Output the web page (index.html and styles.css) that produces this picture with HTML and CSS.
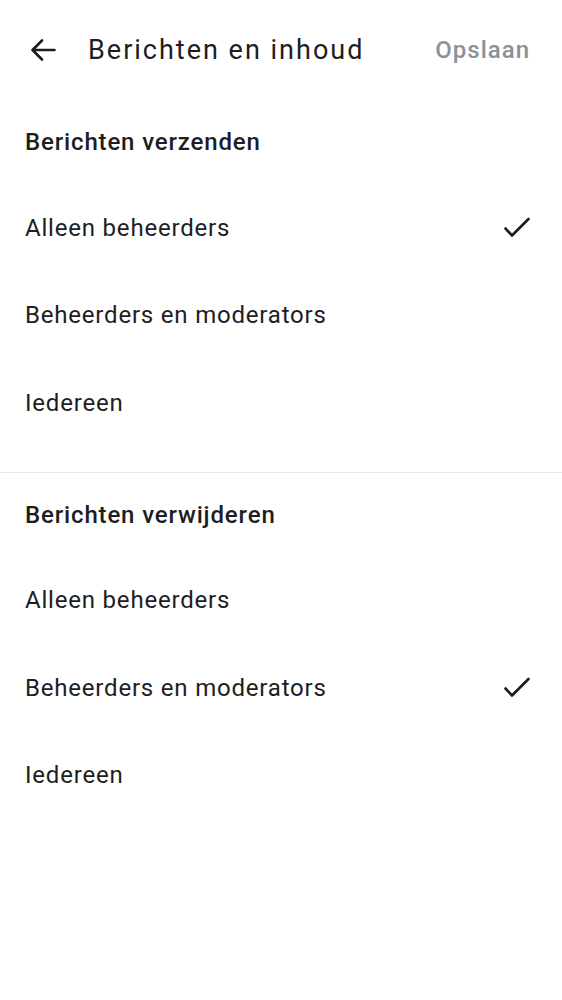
FILE: index.html
```html
<!DOCTYPE html>
<html lang="nl">
<head>
<meta charset="utf-8">
<link rel="stylesheet" href="styles.css">
</head>
<body>
<header class="topbar">
  <button class="back" aria-label="Terug">
    <svg width="26" height="24" viewBox="0 0 26 24"><path d="M24.5 12H2.5M12 2.5L2.5 12L12 21.5" fill="none" stroke="#1c1c20" stroke-width="2.6" stroke-linecap="round" stroke-linejoin="round"/></svg>
  </button>
  <h1 class="title">Berichten en inhoud</h1>
  <span class="save">Opslaan</span>
</header>
<section class="group">
  <h2 class="group-title">Berichten verzenden</h2>
  <div class="option"><span>Alleen beheerders</span>
    <svg class="check" width="28" height="22" viewBox="0 0 28 22"><path d="M2.5 11.5L9 18.5L25.5 2" fill="none" stroke="#1c1c20" stroke-width="2.6" stroke-linecap="round" stroke-linejoin="round"/></svg>
  </div>
  <div class="option"><span>Beheerders en moderators</span></div>
  <div class="option"><span>Iedereen</span></div>
</section>
<div class="divider"></div>
<section class="group">
  <h2 class="group-title">Berichten verwijderen</h2>
  <div class="option"><span>Alleen beheerders</span></div>
  <div class="option"><span>Beheerders en moderators</span>
    <svg class="check" width="28" height="22" viewBox="0 0 28 22"><path d="M2.5 11.5L9 18.5L25.5 2" fill="none" stroke="#1c1c20" stroke-width="2.6" stroke-linecap="round" stroke-linejoin="round"/></svg>
  </div>
  <div class="option"><span>Iedereen</span></div>
</section>
</body>
</html>
```
FILE: styles.css
```css
* { box-sizing: border-box; }
html, body { margin: 0; padding: 0; background: #ffffff; }
body {
  font-family: Roboto, "Noto Sans", Arial, sans-serif;
  color: #1d1d22;
  width: 562px;
}
.topbar {
  height: 100px;
  display: flex;
  align-items: center;
  padding: 0 32px 0 30px;
}
.back {
  border: 0;
  background: none;
  padding: 0;
  margin: 0;
  width: 26px;
  height: 24px;
  display: flex;
  align-items: center;
}
.title {
  margin: 0 0 0 32px;
  font-size: 27px;
  font-weight: 400;
  flex: 1;
  letter-spacing: 2px;
  white-space: nowrap;
}
.save {
  font-size: 24px;
  font-weight: 500;
  color: #8a919b;
  letter-spacing: 1px;
}
.group {
  padding: 0 0 25px;
}
.group-title {
  margin: 0;
  height: 84px;
  display: flex;
  align-items: center;
  padding: 0 25px;
  font-size: 24px;
  font-weight: 500;
  letter-spacing: 0.85px;
}
.option {
  height: 87.5px;
  display: flex;
  align-items: center;
  justify-content: space-between;
  padding: 0 31px 0 25px;
  font-size: 24px;
  letter-spacing: 0.8px;
}
.check { display: block; }
.divider {
  height: 1px;
  background: #e9e9ee;
}
```
